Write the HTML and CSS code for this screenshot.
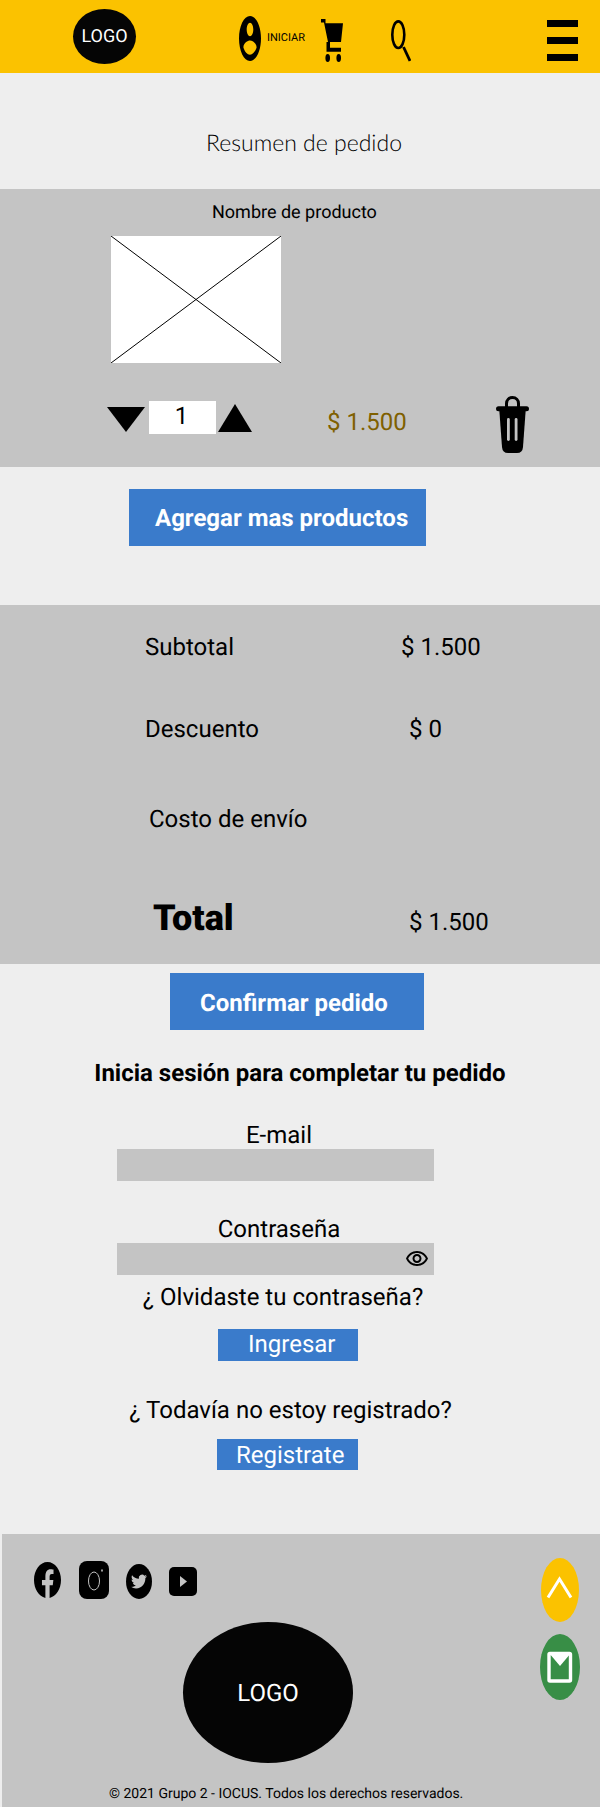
FILE: index.html
```html
<!DOCTYPE html>
<html lang="es">
<head>
<meta charset="utf-8">
<title>Resumen de pedido</title>
<link rel="stylesheet" href="styles.css">
</head>
<body>
<header class="topbar">
  <div class="logo-small">LOGO</div>
  <svg class="ic-user" viewBox="2 2 20 20" preserveAspectRatio="none"><path d="M12 2C6.48 2 2 6.48 2 12s4.48 10 10 10 10-4.48 10-10S17.52 2 12 2zm0 3c1.66 0 3 1.34 3 3s-1.34 3-3 3-3-1.34-3-3 1.34-3 3-3zm0 14.2c-2.5 0-4.71-1.28-6-3.22.03-1.99 4-3.08 6-3.08 1.99 0 5.97 1.09 6 3.08-1.29 1.94-3.5 3.22-6 3.22z"/></svg>
  <span class="login">INICIAR</span>
  <svg class="ic-cart" viewBox="0 0 22 43"><path d="M0 0H4.5V4.3H22L20 23H9V28.7H20V32.7H5.5V23H7L3 3.5H0Z"/><ellipse cx="6.7" cy="39" rx="2.3" ry="4"/><ellipse cx="17.7" cy="39" rx="2.3" ry="4"/></svg>
  <svg class="ic-search" viewBox="0 0 20 42"><ellipse cx="7.3" cy="14.7" rx="6" ry="13.3" fill="none" stroke="#000" stroke-width="2.6"/><path d="M12.5 27L19 41" stroke="#000" stroke-width="2.8" fill="none"/></svg>
  <div class="burger"><span></span><span></span><span></span></div>
</header>

<div class="title-band"><h1 class="title">Resumen de pedido</h1></div>

<section class="product">
  <p class="product-name">Nombre de producto</p>
  <svg class="placeholder" viewBox="0 0 170 127" preserveAspectRatio="none"><rect width="170" height="127" fill="#fff"/><path d="M0 0L170 127M170 0L0 127" stroke="#000" stroke-width="1" fill="none"/></svg>
  <div class="qty-row">
    <svg class="arrow-down" viewBox="0 0 38 25" preserveAspectRatio="none"><path d="M0 0H38L19 25Z"/></svg>
    <div class="qty">1</div>
    <svg class="arrow-up" viewBox="0 0 34 28" preserveAspectRatio="none"><path d="M0 28H34L17 0Z"/></svg>
    <span class="price">$ 1.500</span>
    <svg class="trash" viewBox="0 0 33 57"><path d="M10.5 11V7.5C10.5 4 13 1.5 16.5 1.5S22.5 4 22.5 7.5V11" fill="none" stroke="#000" stroke-width="3"/><rect y="10.3" width="33" height="5" rx="2.5"/><path d="M3.3 14H29.7L27 51Q26.5 57 21 57H12Q6.5 57 6 51Z"/><rect x="11" y="22" width="2.8" height="23" rx="1.4" fill="#c4c4c4"/><rect x="18.7" y="22" width="2.8" height="23" rx="1.4" fill="#c4c4c4"/></svg>
  </div>
</section>

<a class="btn btn-add">Agregar mas productos</a>

<section class="summary">
  <div class="sum-row row-sub"><span class="sum-label">Subtotal</span><span>$ 1.500</span></div>
  <div class="sum-row row-disc"><span class="sum-label">Descuento</span><span class="val-in">$ 0</span></div>
  <div class="sum-row row-ship"><span class="sum-label">Costo de envío</span></div>
  <div class="sum-row row-total"><span class="sum-label total-label">Total</span><span class="val-in val-total">$ 1.500</span></div>
</section>

<a class="btn btn-confirm">Confirmar pedido</a>
<h2 class="login-title">Inicia sesión para completar tu pedido</h2>

<form class="login-form">
  <div class="label label-first">E-mail</div>
  <div class="field"></div>
  <div class="label label-second">Contraseña</div>
  <div class="field field-pass">
    <svg class="eye" viewBox="0 0 24 24"><path d="M12 6c3.79 0 7.17 2.13 8.82 5.5C19.17 14.87 15.79 17 12 17s-7.17-2.13-8.82-5.5C4.83 8.13 8.21 6 12 6m0-2C7 4 2.73 7.11 1 11.5 2.73 15.89 7 19 12 19s9.27-3.11 11-7.5C21.27 7.11 17 4 12 4zm0 5c1.38 0 2.5 1.12 2.5 2.5S13.38 14 12 14s-2.5-1.12-2.5-2.5S10.62 9 12 9m0-2c-2.48 0-4.5 2.02-4.5 4.5S9.52 16 12 16s4.5-2.02 4.5-4.5S14.48 7 12 7z"/></svg>
  </div>
</form>
<p class="note note-forgot">¿ Olvidaste tu contraseña?</p>
<a class="btn-small btn-enter">Ingresar</a>
<p class="note note-reg">¿ Todavía no estoy registrado?</p>
<a class="btn-small btn-reg">Registrate</a>

<footer class="footer">
  <div class="social">
    <svg class="ic-fb" viewBox="0 0 24 24" preserveAspectRatio="none"><path d="M24 12.073c0-6.627-5.373-12-12-12s-12 5.373-12 12c0 5.99 4.388 10.954 10.125 11.854v-8.385H7.078v-3.47h3.047V9.43c0-3.007 1.792-4.669 4.533-4.669 1.312 0 2.686.235 2.686.235v2.953H15.83c-1.491 0-1.956.925-1.956 1.874v2.25h3.328l-.532 3.47h-2.796v8.385C19.612 23.027 24 18.062 24 12.073z"/></svg>
    <svg class="ic-ig" viewBox="0 0 30 38"><rect width="30" height="38" rx="8"/><ellipse cx="15" cy="20" rx="5.5" ry="9" fill="none" stroke="#c4c4c4" stroke-width="1"/><ellipse cx="23" cy="9.5" rx=".8" ry="1.2" fill="#c4c4c4"/></svg>
    <svg class="ic-tw" viewBox="0 0 26 35"><ellipse cx="13" cy="17.5" rx="13" ry="17.5"/><svg x="5" y="9" width="16" height="17" viewBox="0 0 24 24" preserveAspectRatio="none"><path fill="#c4c4c4" d="M23.953 4.57a10 10 0 01-2.825.775 4.958 4.958 0 002.163-2.723c-.951.555-2.005.959-3.127 1.184a4.92 4.92 0 00-8.384 4.482C7.69 8.095 4.067 6.13 1.64 3.162a4.822 4.822 0 00-.666 2.475c0 1.71.87 3.213 2.188 4.096a4.904 4.904 0 01-2.228-.616v.06a4.923 4.923 0 003.946 4.827 4.996 4.996 0 01-2.212.085 4.936 4.936 0 004.604 3.417 9.867 9.867 0 01-6.102 2.105c-.39 0-.779-.023-1.17-.067a13.995 13.995 0 007.557 2.209c9.053 0 13.998-7.496 13.998-13.985 0-.21 0-.42-.015-.63A9.935 9.935 0 0024 4.59z"/></svg></svg>
    <svg class="ic-yt" viewBox="0 0 28 29"><rect width="28" height="29" rx="5"/><path d="M11 9L18 14.5L11 20Z" fill="#c4c4c4"/></svg>
  </div>
  <div class="logo-big">LOGO</div>
  <p class="copy">© 2021 Grupo 2 - IOCUS. Todos los derechos reservados.</p>
  <svg class="fab fab-up" viewBox="0 0 38 64"><ellipse cx="19" cy="32" rx="19" ry="32" fill="#fbc200"/><path d="M7 39.5L18.5 21L30 39.5" fill="none" stroke="#fff" stroke-width="3"/></svg>
  <svg class="fab fab-mail" viewBox="0 0 40 66"><ellipse cx="20" cy="33" rx="20" ry="33" fill="#388e46"/><rect x="9" y="19.5" width="21.5" height="27.5" rx="1" fill="none" stroke="#fff" stroke-width="3.4"/><path d="M9 19H31L20 32Z" fill="#fff"/></svg>
</footer>
</body>
</html>
```
FILE: styles.css
```css
* { box-sizing: border-box; }
html, body { margin: 0; padding: 0; }
body {
  width: 600px;
  height: 1807px;
  overflow: hidden;
  background: #eeeeee;
  color: #000;
  font-family: Roboto, "Liberation Sans", sans-serif;
  font-size: 24px;
  text-rendering: geometricPrecision;
}
h1, h2, p { margin: 0; font-weight: normal; }
svg { display: block; flex: none; }

/* Top bar */
.topbar { display: flex; align-items: flex-start; height: 73px; background: #fbc200; }
.logo-small {
  width: 63px; height: 55px; margin: 9px 0 0 73px;
  display: flex; align-items: center; justify-content: center;
  border-radius: 50%; background: #050505; color: #fff; font-size: 18px;
}
.ic-user { width: 22px; height: 45px; margin: 16px 0 0 103px; }
.login { width: 40px; margin: 31px 0 0 6px; font-size: 11px; line-height: 14px; }
.ic-cart { width: 22px; height: 43px; margin: 19px 0 0 14px; }
.ic-search { width: 20px; height: 42px; margin: 20px 0 0 48px; }
.burger { width: 31px; margin: 20px 0 0 136px; display: flex; flex-direction: column; gap: 10px; }
.burger span { height: 7px; background: #000; }

/* Title */
.title-band { height: 116px; display: flex; align-items: center; justify-content: center; padding: 22px 0 0 8px; }
.title { font-family: Lato, sans-serif; font-weight: 300; font-size: 23px; line-height: 32px; }

/* Product */
.product { height: 278px; background: #c4c4c4; padding-top: 13px; }
.product-name { margin-left: 212px; font-size: 18px; line-height: 21px; }
.placeholder { width: 170px; height: 127px; margin: 13px 0 0 111px; }
.qty-row { display: flex; align-items: flex-start; margin-top: 33px; }
.arrow-down { width: 38px; height: 25px; margin: 11px 0 0 107px; }
.qty { width: 67px; height: 33px; margin: 5px 0 0 4px; padding-right: 2px; background: #fff; text-align: center; line-height: 30px; }
.arrow-up { width: 34px; height: 28px; margin: 8px 0 0 2px; }
.price { width: 79px; margin: 12px 0 0 75px; color: #7f6000; line-height: 28px; white-space: nowrap; }
.trash { width: 33px; height: 57px; margin-left: 90px; }

/* Buttons */
.btn { display: block; background: #3a7bcb; color: #fff; font-weight: 700; line-height: 59px; height: 57px; }
.btn-add { width: 297px; margin: 22px 0 0 129px; padding-left: 26px; }
.btn-confirm { width: 254px; margin: 9px 0 0 170px; padding-left: 30px; line-height: 60px; }
.btn-small { display: block; background: #3a7bcb; color: #fff; }
.btn-enter { width: 140px; height: 32px; margin: 19px 0 0 218px; padding-left: 30px; line-height: 30px; }
.btn-reg { width: 141px; height: 31px; margin: 16px 0 0 217px; padding-left: 19px; line-height: 33px; }

/* Summary */
.summary { height: 359px; margin-top: 59px; background: #c4c4c4; padding-top: 28px; }
.sum-row { display: grid; grid-template-columns: 401px auto; line-height: 28px; }
.sum-row + .sum-row { margin-top: 54px; }
.sum-row.row-ship { margin-top: 62px; }
.sum-row.row-total { margin-top: 64px; }
.row-sub .sum-label, .row-disc .sum-label { padding-left: 145px; }
.row-ship .sum-label { padding-left: 149px; }
.total-label { padding-left: 153px; font-size: 36px; font-weight: 900; line-height: 42px; }
.val-in { margin-left: 8px; }
.val-total { margin-top: 11px; }

/* Login */
.login-title { margin-top: 29px; text-align: center; font-size: 24px; font-weight: 700; line-height: 28px; }
.login-form { width: 317px; margin: 0 0 0 117px; }
.label { height: 28px; padding: 1px 0 0 7px; text-align: center; line-height: 28px; }
.label-first { margin-top: 33px; }
.label-second { margin-top: 33px; }
.field { height: 32px; margin-top: 1px; background: #c4c4c4; }
.field-pass { display: flex; justify-content: flex-end; padding: 4px 5px 0 0; }
.eye { width: 24px; height: 24px; }
.note { height: 28px; padding-top: 1px; text-align: center; line-height: 28px; }
.note-forgot { margin-top: 7px; padding-right: 34px; white-space: nowrap; }
.note-reg { margin-top: 34px; padding-right: 19px; white-space: nowrap; }

/* Footer */
.footer { position: relative; height: 273px; margin: 64px 0 0 2px; background: #c4c4c4; padding-top: 27px; }
.social { display: flex; align-items: flex-start; height: 38px; padding-left: 32px; }
.ic-fb { width: 27px; height: 36px; margin-top: 1px; }
.ic-ig { width: 30px; height: 38px; margin-left: 18px; }
.ic-tw { width: 26px; height: 35px; margin: 3px 0 0 17px; }
.ic-yt { width: 28px; height: 29px; margin: 6px 0 0 17px; }
.logo-big {
  width: 170px; height: 141px; margin: 23px 0 0 181px;
  display: flex; align-items: center; justify-content: center;
  border-radius: 50%; background: #050505; color: #fff;
}
.copy { margin: 23px 0 0 107px; font-size: 14px; line-height: 16px; white-space: nowrap; }
.fab { position: absolute; }
.fab-up { left: 539px; top: 24px; width: 38px; height: 64px; }
.fab-mail { left: 538px; top: 100px; width: 40px; height: 66px; }
```
